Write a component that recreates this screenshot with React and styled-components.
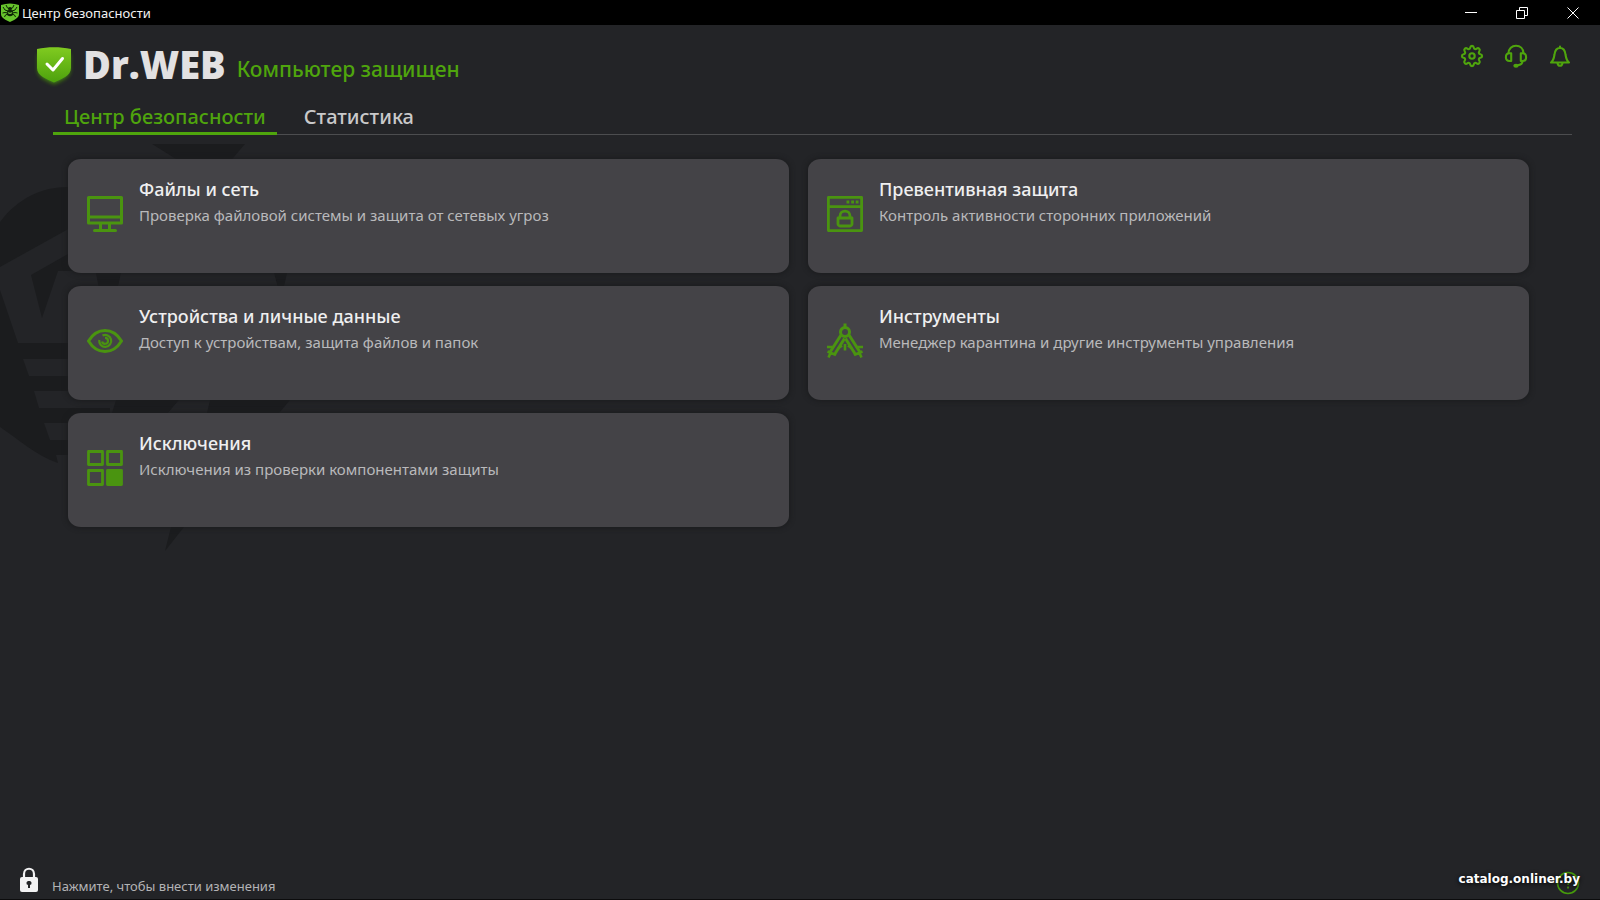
import styled, { createGlobalStyle } from "styled-components";

const GlobalStyle = createGlobalStyle`
  * {
    box-sizing: border-box;
  }
  body {
    margin: 0;
    background: #232427;
    font-family: "Noto Sans", "Open Sans", sans-serif;
  }
  button {
    font-family: inherit;
    border: 0;
    padding: 0;
    background: none;
    cursor: pointer;
  }
`;

const Window = styled.div`
  position: relative;
  isolation: isolate;
  display: flex;
  flex-direction: column;
  min-height: 100vh;
  overflow: hidden;
  border-bottom: 1px solid #0c0c0d;
`;
const Backdrop = styled.svg`
  position: absolute;
  left: 0;
  top: 140px;
  z-index: -1;
`;

const TitleBar = styled.div`
  display: flex;
  align-items: center;
  height: 25px;
  padding-left: 1px;
  gap: 3px;
  background: #000;
  color: #f2f2f2;
  font-size: 13px;
`;
const WindowTitle = styled.span`
  flex: 1;
  line-height: 18px;
`;
const WindowButtons = styled.div`
  display: flex;
  padding-right: 2px;
`;
const WindowButton = styled.button`
  display: flex;
  align-items: center;
  justify-content: center;
  width: 51px;
  height: 24px;
  color: #fff;
`;

const Header = styled.header`
  display: flex;
  justify-content: space-between;
  height: 72px;
  padding: 17px 28px 0 32px;
`;
const Brand = styled.div`
  display: flex;
  align-items: flex-start;
  gap: 11px;
`;
const BrandShield = styled.svg`
  margin-right: -4px;
  overflow: visible;
`;
const Logo = styled.span`
  color: #e2e1e2;
  font-family: "Open Sans", "Noto Sans", sans-serif;
  font-size: 38px;
  font-weight: 800;
  line-height: 44px;
`;
const Status = styled.span`
  color: #4fa50d;
  font-size: 21px;
  font-weight: 500;
  line-height: 54px;
`;
const HeaderActions = styled.div`
  display: flex;
  align-items: flex-start;
  gap: 20px;
`;
const IconButton = styled.button`
  display: flex;
  width: 24px;
  height: 28px;
  align-items: center;
  justify-content: center;
  color: #4fa50d;
`;

const Tabs = styled.nav`
  display: flex;
  gap: 16px;
  height: 38px;
  margin: 0 28px 0 53px;
  box-shadow: inset 0 -1px #4c4d4f;
`;
const Tab = styled.button`
  height: 38px;
  padding: 5px 11px 0;
  border-bottom: 3px solid ${(props) => (props.$active ? "#4fa50d" : "transparent")};
  color: ${(props) => (props.$active ? "#4fa50d" : "#c9c9ca")};
  font-size: 20px;
  font-weight: 500;
  line-height: 30px;
  white-space: nowrap;
`;

const Grid = styled.main`
  display: grid;
  grid-template-columns: 1fr 1fr;
  gap: 13px 19px;
  margin: 24px 71px 0 68px;
`;
const Card = styled.button`
  display: flex;
  align-items: flex-start;
  gap: 16px;
  height: 114px;
  padding: 17px 19px;
  border-radius: 13px / 11px;
  background: #444347;
  box-shadow: 0 0 5px 1px #1b1c1e;
  text-align: left;
`;
const CardIcon = styled.svg`
  flex: none;
  margin-top: 20px;
  color: #4a9410;
`;
const CardTitle = styled.span`
  display: block;
  color: #efeff0;
  font-size: 18px;
  font-weight: 500;
  line-height: 26px;
`;
const CardText = styled.span`
  display: block;
  color: #b9b9bb;
  font-size: 15px;
  line-height: 26px;
`;

const Footer = styled.footer`
  display: flex;
  align-items: flex-end;
  justify-content: space-between;
  margin-top: auto;
  padding: 0 20px 4px;
`;
const LockButton = styled.button`
  display: flex;
  align-items: flex-end;
  gap: 14px;
  color: #b3b3b5;
  font-size: 13px;
  line-height: 18px;
`;
const LockIcon = styled.svg`
  margin-bottom: 2px;
`;
const HelpButton = styled.button`
  position: relative;
  display: flex;
  width: 24px;
  height: 24px;
  color: #469a0c;
`;
const Watermark = styled.span`
  position: absolute;
  right: 0;
  top: 1px;
  color: #fff;
  font: bold 12px/14px "DejaVu Sans", sans-serif;
  text-shadow: 0 1px 4px #000;
`;

function SpiderBackdrop() {
  return (
    <Backdrop width="300" height="420" viewBox="0 140 300 420" aria-hidden="true">
      <g fill="#1b1c1e">
        <path d="M152 144H245L228 164H184Z" />
        <path d="M0 222C18 198 42 187 68 187H110V420H180L160 455H68L56 455L58 463C35 455 18 439 0 427Z" />
        <path d="M274 273H287L281 300Z" />
        <path d="M210 400H290L184 527L165 551L171 527Z" />
      </g>
      <g fill="#232427">
        <path d="M0 267L90 217V250L68 254L31 275L42 318L58 271H96L106 310L110 343H18L0 290Z" />
        <path d="M23 359H128L122 376H29Z" />
        <path d="M34 391H121L115 408H39Z" />
        <path d="M44 423H110L104 440H50Z" />
      </g>
      <path fill="#1b1c1e" d="M96 273H121L115 310H103Z" />
      <path fill="#1b1c1e" d="M116 400H179L168 413H112Z" />
      <path fill="#232427" d="M121 273H274L281 300H115ZM179 400H210L207 413H168Z" />
    </Backdrop>
  );
}

function SpiderShield() {
  return (
    <svg width="18" height="19" viewBox="0 0 18 19" aria-hidden="true">
      <path fill="#67c32c" d="M0 2C6 0 12 0 18 2V11C18 15 13 17 9 19C5 17 0 15 0 11Z" />
      <g fill="none" stroke="#0c2404" strokeWidth="1">
        <path d="M5 2L6.500 5M13 2L11.500 5M2 4L4 7L7 8M16 4L14 7L11 8M1.500 10L4 9.500L7 10M16.500 10L14 9.500L11 10M3.500 14L4.500 12L7 11M14.500 14L13.500 12L11 11" />
      </g>
      <ellipse cx="9" cy="10" rx="3.200" ry="3.200" fill="#0c2404" />
      <ellipse cx="9" cy="5.500" rx="2.200" ry="1.600" fill="#0c2404" />
      <path d="M7 9L8.200 11L9 9.500L9.800 11L11 9" fill="none" stroke="#7ed23f" strokeWidth=".8" />
    </svg>
  );
}

function CheckShield() {
  return (
    <BrandShield width="44" height="46" viewBox="32 42 44 46" aria-hidden="true">
      <defs>
        <linearGradient id="shield" x1="0" y1="0" x2="0" y2="1">
          <stop offset="0" stopColor="#80cb20" />
          <stop offset="1" stopColor="#4da10d" />
        </linearGradient>
        <filter id="glow" x="-30%" y="-30%" width="160%" height="160%">
          <feGaussianBlur stdDeviation="2" />
        </filter>
      </defs>
      <path d="M38 54H70V72C68 78 60 81 54 84C48 81 40 78 38 72Z" fill="#4da10d" opacity=".8" filter="url(#glow)" />
      <path d="M37 49C48 46.500 60 46.500 71 49V68C71 76 61 79 54 82.500C47 79 37 76 37 68Z" fill="url(#shield)" />
      <path d="M47 64L53 70L62.500 58.500" fill="none" stroke="#fff" strokeWidth="3" strokeLinecap="round" strokeLinejoin="round" />
    </BrandShield>
  );
}

function GearIcon() {
  return (
    <svg width="24" height="24" viewBox="0 0 24 24" fill="none" stroke="currentColor" strokeWidth="2.100" strokeLinejoin="round">
      <path d="M10.200 3.600C10.500 1.300 13.500 1.300 13.800 3.600C14 5.200 15.500 5.600 16.700 4.700C18.500 3.300 20.700 5.500 19.300 7.300C18.400 8.500 18.800 10 20.400 10.200C22.700 10.500 22.700 13.500 20.400 13.800C18.800 14 18.400 15.500 19.300 16.700C20.700 18.500 18.500 20.700 16.700 19.300C15.500 18.400 14 18.800 13.800 20.400C13.500 22.700 10.500 22.700 10.200 20.400C10 18.800 8.500 18.400 7.300 19.300C5.500 20.700 3.300 18.500 4.700 16.700C5.600 15.500 5.200 14 3.600 13.800C1.300 13.500 1.300 10.500 3.600 10.200C5.200 10 5.600 8.500 4.700 7.300C3.300 5.500 5.500 3.300 7.300 4.700C8.500 5.600 10 5.200 10.200 3.600Z" />
      <circle cx="12" cy="12" r="2.700" />
    </svg>
  );
}

function HeadsetIcon() {
  return (
    <svg width="24" height="24" viewBox="0 0 24 24" fill="none" stroke="currentColor" strokeWidth="2.100" strokeLinejoin="round">
      <path d="M4.500 9.500C4.500 4.500 8 1.800 12 1.800S19.500 4.500 19.500 9.500" />
      <path d="M7.200 9.300V17H5.500C3.200 17 1.900 15.400 1.900 13.200S3.200 9.300 5.500 9.300Z" />
      <path d="M16.800 9.300V17H18.500C20.800 17 22.100 15.400 22.100 13.200S20.800 9.300 18.500 9.300Z" />
      <path d="M18.500 17C18.500 19.500 16.500 21 13.500 21.200" />
      <ellipse cx="12" cy="21.700" rx="2.700" ry="2" fill="currentColor" stroke="none" />
    </svg>
  );
}

function BellIcon() {
  return (
    <svg width="24" height="24" viewBox="0 0 24 24" fill="none" stroke="currentColor" strokeWidth="2.100" strokeLinejoin="round" strokeLinecap="round">
      <path d="M12 2.500V4M3 18.500H21C18.500 16.500 18 14 17.500 10.500C17 6 15.500 4 12 4S7 6 6.500 10.500C6 14 5.500 16.500 3 18.500Z" />
      <path d="M9.500 19C9.800 21 10.700 21.800 12 21.800S14.200 21 14.500 19" />
    </svg>
  );
}

const cardIcons = {
  monitor: (
    <g fill="none" stroke="currentColor" strokeWidth="3" strokeLinejoin="round">
      <path d="M1.500 1.500H34.500V27H1.500ZM1.500 21H34.500" />
      <path d="M13.500 28V33M22.500 28V33" />
      <path d="M7.500 34.500H28.500" strokeLinecap="round" />
    </g>
  ),
  appLock: (
    <g fill="none" stroke="currentColor" strokeWidth="2.800" strokeLinejoin="round">
      <path d="M1.400 1.400H34.600V34.600H1.400ZM1.400 10.700H34.600" />
      <path d="M11 22H25V28C25 29 24 30 23 30H13C12 30 11 29 11 28ZM13 22V20C13 13.500 23 13.500 23 20V22" />
      <path d="M19.500 6H22.300M24.200 6H27M28.700 6H31.500" />
    </g>
  ),
  eye: (
    <g fill="none" stroke="currentColor" strokeWidth="3" strokeLinejoin="round">
      <path d="M1.500 18C10 4 26 4 34.500 18C26 32 10 32 1.500 18Z" />
      <path d="M15.500 12.600A6 6 0 1 1 12.300 17" strokeWidth="2.200" />
      <path d="M18 14.800A3 3 0 1 1 15.100 18.500" strokeWidth="2.200" />
    </g>
  ),
  compass: (
    <g fill="none" stroke="currentColor" strokeWidth="2.600" strokeLinejoin="round">
      <circle cx="18" cy="9" r="4.500" strokeWidth="3" />
      <path d="M18 .5V4.500" strokeWidth="3" />
      <path d="M14 12L2.500 30M22 12L33.500 30M17.500 15.500L7.500 31.500M18.500 15.500L28.500 31.500" strokeWidth="3" />
      <path d="M0 24H5.500M36 24H30.500M.5 28.500L9 32M35.500 28.500L27 32M3.500 30L1.500 34.500M32.500 30L34.500 34.500" />
      <path d="M11 25.500L15 22.500M25 25.500L21 22.500M18 21V27.500" />
    </g>
  ),
  blocks: (
    <g fill="none" stroke="currentColor" strokeWidth="2.800" strokeLinejoin="round">
      <path d="M1.500 1.500H15.500V14.500H1.500ZM20.500 1.500H34.500V14.500H20.500ZM1.500 20.500H15.500V34.500H1.500Z" />
      <path d="M20.500 20.500H34.500V34.500H20.500Z" fill="currentColor" />
    </g>
  ),
};

const sections = [
  { icon: "monitor", title: "Файлы и сеть", text: "Проверка файловой системы и защита от сетевых угроз" },
  { icon: "appLock", title: "Превентивная защита", text: "Контроль активности сторонних приложений" },
  { icon: "eye", title: "Устройства и личные данные", text: "Доступ к устройствам, защита файлов и папок" },
  { icon: "compass", title: "Инструменты", text: "Менеджер карантина и другие инструменты управления" },
  { icon: "blocks", title: "Исключения", text: "Исключения из проверки компонентами защиты" },
];

export default function App() {
  return (
    <Window>
      <GlobalStyle />
      <SpiderBackdrop />
      <TitleBar>
        <SpiderShield />
        <WindowTitle>Центр безопасности</WindowTitle>
        <WindowButtons>
          <WindowButton aria-label="Свернуть">
            <svg width="12" height="12" stroke="currentColor"><path d="M0 5.500H12" /></svg>
          </WindowButton>
          <WindowButton aria-label="Восстановить">
            <svg width="12" height="12" fill="none" stroke="currentColor"><path d="M.5 3.500H8.500V11.500H.5ZM3.500 3V.5H11.500V8.500H9" /></svg>
          </WindowButton>
          <WindowButton aria-label="Закрыть">
            <svg width="12" height="12" stroke="currentColor"><path d="M.5.5L11.500 11.500M11.500.5L.5 11.500" /></svg>
          </WindowButton>
        </WindowButtons>
      </TitleBar>
      <Header>
        <Brand>
          <CheckShield />
          <Logo>Dr.WEB</Logo>
          <Status>Компьютер защищен</Status>
        </Brand>
        <HeaderActions>
          <IconButton aria-label="Настройки"><GearIcon /></IconButton>
          <IconButton aria-label="Поддержка"><HeadsetIcon /></IconButton>
          <IconButton aria-label="Уведомления"><BellIcon /></IconButton>
        </HeaderActions>
      </Header>
      <Tabs>
        <Tab $active>Центр безопасности</Tab>
        <Tab>Статистика</Tab>
      </Tabs>
      <Grid>
        {sections.map((section) => (
          <Card key={section.icon}>
            <CardIcon width="36" height="36" viewBox="0 0 36 36">{cardIcons[section.icon]}</CardIcon>
            <span>
              <CardTitle>{section.title}</CardTitle>
              <CardText>{section.text}</CardText>
            </span>
          </Card>
        ))}
      </Grid>
      <Footer>
        <LockButton>
          <LockIcon width="18" height="26" viewBox="0 0 18 26" aria-hidden="true">
            <path d="M4 11V7C4 0 14 0 14 7V11" fill="none" stroke="#f2f2f3" strokeWidth="2.200" />
            <rect y="10" width="18" height="15" rx="2" fill="#f2f2f3" />
            <path d="M9 14A2 2 0 0 1 10 18V21H8V18A2 2 0 0 1 9 14Z" fill="#232427" />
          </LockIcon>
          Нажмите, чтобы внести изменения
        </LockButton>
        <HelpButton aria-label="Справка">
          <svg width="24" height="24" viewBox="0 0 24 24" fill="none" stroke="currentColor" strokeWidth="1.600">
            <circle cx="12" cy="12" r="10.500" />
            <path d="M9 9C9 5 15 5 15 9C15 11 12 11 12 14M12 15.500V17.500" />
          </svg>
          <Watermark>catalog.onliner.by</Watermark>
        </HelpButton>
      </Footer>
    </Window>
  );
}
